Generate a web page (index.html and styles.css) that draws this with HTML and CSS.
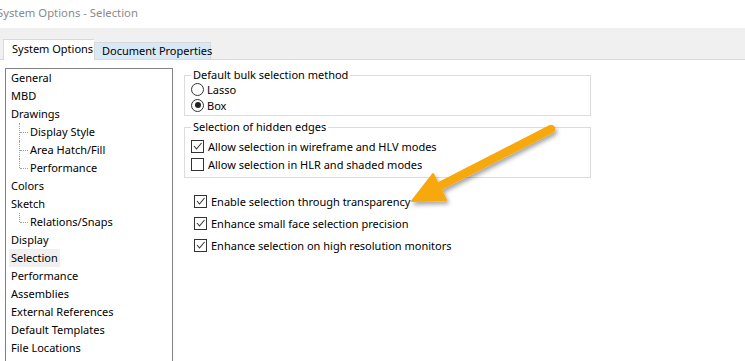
FILE: index.html
```html
<!DOCTYPE html>
<html>
<head>
<meta charset="utf-8">
<link rel="stylesheet" href="styles.css">
</head>
<body>
<div class="titlebar"><span class="title">System Options - Selection</span></div>
<div class="tabstrip">
  <div class="tab active">System Options</div>
  <div class="tab">Document Properties</div>
</div>
<div class="content">
  <div class="tree">
    <div class="item">General</div>
    <div class="item">MBD</div>
    <div class="item">Drawings</div>
    <div class="children">
      <div class="item child">Display Style</div>
      <div class="item child">Area Hatch/Fill</div>
      <div class="item child last">Performance</div>
    </div>
    <div class="item">Colors</div>
    <div class="item">Sketch</div>
    <div class="children">
      <div class="item child last">Relations/Snaps</div>
    </div>
    <div class="item">Display</div>
    <div class="item"><span class="sel">Selection</span></div>
    <div class="item">Performance</div>
    <div class="item">Assemblies</div>
    <div class="item">External References</div>
    <div class="item">Default Templates</div>
    <div class="item">File Locations</div>
  </div>
  <div class="panel">
    <fieldset class="group g1">
      <legend>Default bulk selection method</legend>
      <div class="row r16"><span class="radio"></span>Lasso</div>
      <div class="row r16"><span class="radio on"></span>Box</div>
    </fieldset>
    <fieldset class="group g2">
      <legend>Selection of hidden edges</legend>
      <div class="row r18"><span class="check"><svg class="tick" width="11" height="11" viewBox="0 0 11 11"><polyline points="2,5 4.5,8 9.5,2" /></svg></span>Allow selection in wireframe and HLV modes</div>
      <div class="row r18"><span class="check"></span>Allow selection in HLR and shaded modes</div>
    </fieldset>
    <div class="loose">
      <div class="row r22"><span class="check"><svg class="tick" width="11" height="11" viewBox="0 0 11 11"><polyline points="2,5 4.5,8 9.5,2" /></svg></span>Enable selection through transparency</div>
      <div class="row r22"><span class="check"><svg class="tick" width="11" height="11" viewBox="0 0 11 11"><polyline points="2,5 4.5,8 9.5,2" /></svg></span>Enhance small face selection precision</div>
      <div class="row r22"><span class="check"><svg class="tick" width="11" height="11" viewBox="0 0 11 11"><polyline points="2,5 4.5,8 9.5,2" /></svg></span>Enhance selection on high resolution monitors</div>
    </div>
  </div>
</div>
<svg class="arrow" width="745" height="361" viewBox="0 0 745 361">
  <defs>
    <filter id="sh" x="-20%" y="-20%" width="140%" height="140%">
      <feDropShadow dx="2" dy="3" stdDeviation="2" flood-color="#000" flood-opacity="0.35"/>
    </filter>
  </defs>
  <g filter="url(#sh)" fill="#f7a80c" stroke="#f7a80c">
    <line x1="551" y1="129" x2="436" y2="188" stroke-width="8.5" stroke-linecap="round"/>
    <polygon points="433,174 446,200 412,201" stroke-width="2" stroke-linejoin="round"/>
  </g>
</svg>
</body>
</html>
```
FILE: styles.css
```css
html, body {
  margin: 0;
  padding: 0;
  background: #ffffff;
}
body {
  width: 745px;
  height: 361px;
  overflow: hidden;
  position: relative;
  font-family: "Noto Sans", "Open Sans", sans-serif;
  font-size: 11px;
  color: #000;
}
.titlebar {
  height: 28px;
  background: #ffffff;
  display: flex;
  align-items: center;
}
.title {
  margin-left: -3px;
  font-size: 11.3px;
  color: #8a8a8a;
  margin-top: -3px;
  white-space: nowrap;
}
.tabstrip {
  height: 32px;
  box-sizing: border-box;
  background: #f0f0f0;
  border-bottom: 1px solid #d9d9d9;
  display: flex;
  align-items: flex-end;
  padding-left: 3px;
}
.tab {
  box-sizing: border-box;
  height: 17px;
  line-height: 16px;
  padding: 0 0 0 7px;
  background: #d9e8f5;
  border: 1px solid #d9d9d9;
  border-bottom: none;
  width: 117px;
  white-space: nowrap;
}
.tab.active {
  height: 21px;
  line-height: 17px;
  background: #ffffff;
  width: 91px;
  padding-left: 8px;
  margin-bottom: -1px;
  border-right: none;
}
.content {
  display: flex;
  align-items: flex-start;
}
.tree {
  margin: 8px 0 0 5px;
  width: 168px;
  height: 320px;
  box-sizing: border-box;
  border: 1px solid #828282;
  padding: 0 0 0 5px;
}
.item {
  height: 18px;
  line-height: 18px;
  white-space: nowrap;
}
.children .child {
  position: relative;
  padding-left: 19px;
}
.children .child::before {
  content: "";
  position: absolute;
  left: 8px;
  top: 0;
  height: 18px;
  border-left: 1px dotted #a0a0a0;
}
.children .child.last::before {
  height: 9px;
}
.children .child::after {
  content: "";
  position: absolute;
  left: 9px;
  top: 9px;
  width: 8px;
  border-top: 1px dotted #a0a0a0;
}
.sel {
  display: inline-block;
  background: #f0f0f0;
  margin-left: -2px;
  padding: 0 2px;
}
.panel {
  margin-left: 11px;
  width: 407px;
}
.group {
  margin: 0;
  padding: 0 0 0 6px;
  border: 1px solid #dcdcdc;
  min-width: 0;
}
.group legend {
  padding: 0 2px;
  line-height: 14px;
  height: 14px;
}
.g1 {
  margin-top: 8px;
  height: 48px;
  box-sizing: border-box;
}
.g1 .row:first-of-type {
  margin-top: -1px;
}
.g2 {
  margin-top: 4px;
  height: 58px;
  box-sizing: border-box;
}
.g2 .row:first-of-type {
  margin-top: 3px;
}
.row {
  display: flex;
  align-items: center;
  white-space: nowrap;
}
.r16 { height: 16px; }
.r18 { height: 18px; }
.r22 { height: 22px; }
.radio {
  width: 13px;
  height: 13px;
  box-sizing: border-box;
  border: 1px solid #333333;
  border-radius: 50%;
  margin-right: 3px;
  position: relative;
  background: #fff;
}
.radio.on::after {
  content: "";
  position: absolute;
  left: 2.5px;
  top: 2.5px;
  width: 6px;
  height: 6px;
  border-radius: 50%;
  background: #222222;
}
.check {
  width: 13px;
  height: 13px;
  box-sizing: border-box;
  border: 1px solid #333333;
  margin-right: 4px;
  background: #fff;
  display: flex;
}
.tick {
  display: block;
  fill: none;
  stroke: #333333;
  stroke-width: 1.1;
}
.loose {
  margin-top: 12px;
  padding-left: 10px;
}
.arrow {
  position: absolute;
  left: 0;
  top: 0;
  pointer-events: none;
}
```
